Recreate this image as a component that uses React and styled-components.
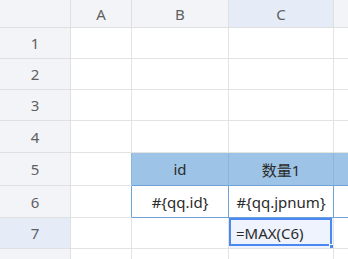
import styled, { createGlobalStyle } from "styled-components";

const GlobalStyle = createGlobalStyle`
  html, body {
    margin: 0;
    padding: 0;
    background: #ffffff;
    overflow: hidden;
  }
  * { box-sizing: border-box; }
`;

const colWidths = [71, 61, 97, 105, 110];
const rowHeights = [28, 31, 31, 31, 32, 33, 32, 31, 31];
const letters = ["A", "B", "C", "D"];

const Sheet = styled.div`
  display: grid;
  grid-template-columns: ${colWidths.map((w) => `${w}px`).join(" ")};
  grid-template-rows: ${rowHeights.map((h) => `${h}px`).join(" ")};
  width: 348px;
  height: 259px;
  overflow: hidden;
  font-family: "Noto Sans", "Noto Sans CJK SC", sans-serif;
`;

const Cell = styled.div`
  position: relative;
  display: flex;
  align-items: center;
  justify-content: ${(p) => (p.$align === "left" ? "flex-start" : "center")};
  padding-left: ${(p) => (p.$align === "left" ? "7px" : "0")};
  background: ${(p) => p.$bg || "#ffffff"};
  border-right: 1px solid ${(p) => p.$right || "#e3e3e3"};
  border-bottom: 1px solid ${(p) => p.$bottom || "#e3e3e3"};
  color: #2b2b2b;
  font-size: 15px;
  white-space: nowrap;
  overflow: hidden;
`;

const HeadCell = styled(Cell)`
  background: ${(p) => (p.$active ? "#e5ebf7" : "#f3f4f8")};
  color: #5f5f5f;
  font-size: 15px;
  border-right-color: #e0e0e0;
  border-bottom-color: #e0e0e0;
`;

const Selection = styled.div`
  position: absolute;
  left: 0;
  top: 0;
  width: 103px;
  height: 28px;
  border: 2px solid #4a88f2;
  pointer-events: none;
`;

const Handle = styled.div`
  position: absolute;
  left: 100px;
  top: 26px;
  width: 5px;
  height: 5px;
  background: #4a88f2;
  border: 1px solid #ffffff;
`;

const tableBlue = "#9dc3e6";
const tableLine = "#8cb5dd";
const bodyLine = "#6fa3d8";

function cellProps(row, col) {
  // row is the sheet row (1-based), col 0 = A
  if (row === 5 && col >= 1) {
    return { $bg: tableBlue, $right: tableLine, $bottom: bodyLine };
  }
  if (row === 6 && col >= 1) {
    return { $right: bodyLine, $bottom: bodyLine };
  }
  if (row === 6 && col === 0) {
    return { $right: bodyLine };
  }
  if (row === 5 && col === 0) {
    return { $right: tableLine };
  }
  if (row === 7 && col === 2) {
    return { $bg: "#eef3fd", $align: "left" };
  }
  return {};
}

const content = {
  "5-1": "id",
  "5-2": "数量1",
  "6-1": "#{qq.id}",
  "6-2": "#{qq.jpnum}",
  "7-2": "=MAX(C6)",
};

export default function App() {
  const rows = [1, 2, 3, 4, 5, 6, 7, 8];
  return (
    <>
      <GlobalStyle />
      <Sheet>
        <HeadCell />
        {letters.map((l) => (
          <HeadCell key={l} $active={l === "C"}>{l}</HeadCell>
        ))}
        {rows.map((r) => [
          <HeadCell key={`h${r}`} $active={r === 7}>{r}</HeadCell>,
          ...letters.map((l, c) => (
            <Cell key={`${r}-${c}`} {...cellProps(r, c)}>
              {content[`${r}-${c}`]}
              {r === 7 && c === 2 && (
                <>
                  <Selection />
                  <Handle />
                </>
              )}
            </Cell>
          )),
        ])}
      </Sheet>
    </>
  );
}
